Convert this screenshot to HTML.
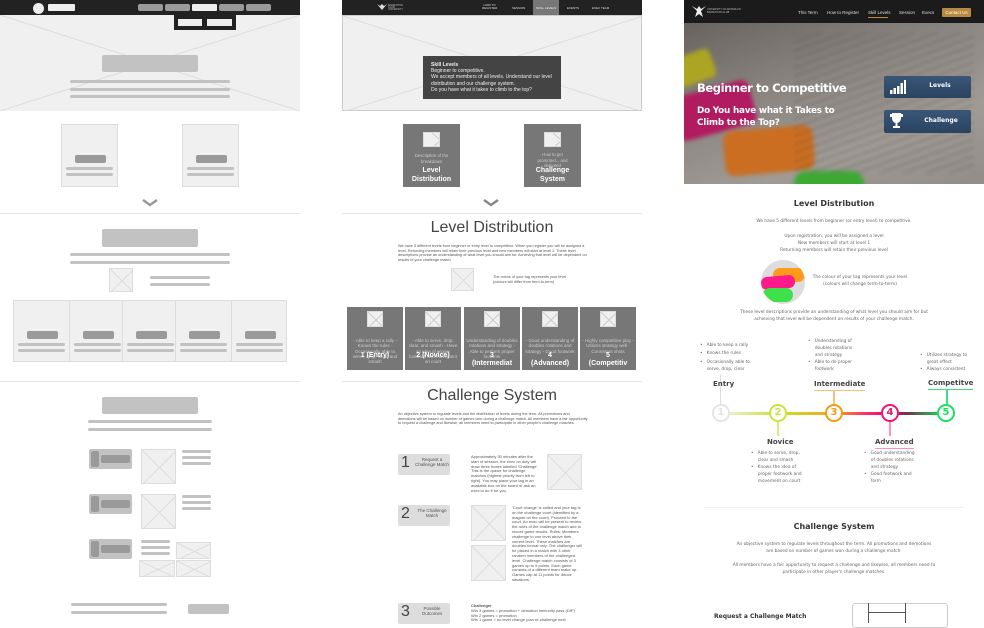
<!DOCTYPE html>
<html><head><meta charset="utf-8">
<style>
*{margin:0;padding:0;box-sizing:border-box}
body{width:984px;height:622px;background:#fff;position:relative;overflow:hidden;font-family:"Liberation Sans",sans-serif}
.a{position:absolute}
.g{background:#c2c2c2;border-radius:2px}
.d{background:#9a9a9a;border-radius:2px}
.ph{background:#f0f0f0;border:1px solid #ddd;overflow:hidden}
.t{position:absolute;font-size:4.5px;line-height:5.3px;color:#555}
.w{color:#eee}
.bul{position:absolute;font-family:"DejaVu Sans",sans-serif;font-size:4.3px;line-height:7px;color:#666}
.lbl{position:absolute;font-family:"DejaVu Sans",sans-serif;font-weight:bold;font-size:7px;color:#444;padding-bottom:2px}
.circ{position:absolute;width:18px;height:18px;border-radius:50%;background:#fff;border:2.5px solid;font-family:"DejaVu Sans",sans-serif;font-weight:bold;font-size:10px;text-align:center;line-height:13px}
</style></head><body>

<!-- ============ LEFT PANEL ============ -->
<div class="a" style="left:0;top:0;width:300px;height:15px;background:#222"></div>
<div class="a" style="left:33px;top:3px;width:11px;height:11px;border-radius:50%;background:#eee"></div>
<div class="a" style="left:48px;top:4px;width:27px;height:7px;background:#eee;border-radius:1px"></div>
<div class="a d" style="left:138px;top:4px;width:25px;height:7px"></div>
<div class="a d" style="left:165px;top:4px;width:25px;height:7px"></div>
<div class="a" style="left:192px;top:4px;width:25px;height:7px;background:#eee;border-radius:1px"></div>
<div class="a d" style="left:219px;top:4px;width:25px;height:7px"></div>
<div class="a d" style="left:246px;top:4px;width:25px;height:7px"></div>
<div class="a ph" style="left:0;top:15px;width:300px;height:96px;border:none">
<svg width="300" height="96" class="a"><line x1="0" y1="0" x2="300" y2="96" stroke="#ddd"/><line x1="300" y1="0" x2="0" y2="96" stroke="#ddd"/></svg></div>
<div class="a" style="left:174px;top:15px;width:62px;height:15px;background:#222"></div>
<div class="a" style="left:178px;top:19px;width:24px;height:7px;background:#eee"></div>
<div class="a" style="left:207px;top:19px;width:25px;height:7px;background:#eee"></div>
<div class="a g" style="left:102px;top:55px;width:96px;height:17px"></div>
<div class="a g" style="left:70px;top:80px;width:160px;height:3px"></div>
<div class="a g" style="left:70px;top:88px;width:160px;height:3px"></div>
<div class="a g" style="left:70px;top:95px;width:160px;height:3px"></div>

<div class="a ph" style="left:61px;top:124px;width:57px;height:63px"></div>
<div class="a d" style="left:75px;top:155px;width:31px;height:8px"></div>
<div class="a g" style="left:66px;top:167px;width:47px;height:3px"></div>
<div class="a g" style="left:66px;top:173px;width:47px;height:3px"></div>
<div class="a ph" style="left:182px;top:124px;width:57px;height:63px"></div>
<div class="a d" style="left:196px;top:155px;width:31px;height:8px"></div>
<div class="a g" style="left:187px;top:167px;width:47px;height:3px"></div>
<div class="a g" style="left:187px;top:173px;width:47px;height:3px"></div>
<svg class="a" style="left:142px;top:199px" width="16" height="8"><path d="M1 1 L8 6 L15 1" stroke="#999" stroke-width="2.5" fill="none"/></svg>
<div class="a" style="left:0;top:213px;width:300px;height:1px;background:#e6e6e6"></div>

<div class="a g" style="left:102px;top:229px;width:96px;height:18px"></div>
<div class="a g" style="left:70px;top:253px;width:160px;height:3px"></div>
<div class="a g" style="left:70px;top:261px;width:160px;height:3px"></div>
<div class="a ph" style="left:109px;top:268px;width:24px;height:24px"><svg width="24" height="24" class="a"><path d="M0 0L24 24M24 0L0 24" stroke="#ddd"/></svg></div>
<div class="a g" style="left:150px;top:276px;width:60px;height:3px"></div>
<div class="a g" style="left:150px;top:283px;width:60px;height:3px"></div>

<div class="a ph" style="left:13px;top:300px;width:274px;height:62px"></div>
<div class="a" style="left:69px;top:300px;width:1px;height:62px;background:#ddd"></div>
<div class="a" style="left:122px;top:300px;width:1px;height:62px;background:#ddd"></div>
<div class="a" style="left:175px;top:300px;width:1px;height:62px;background:#ddd"></div>
<div class="a" style="left:231px;top:300px;width:1px;height:62px;background:#ddd"></div>
<div class="a d" style="left:27px;top:331px;width:31px;height:8px"></div>
<div class="a d" style="left:83px;top:331px;width:31px;height:8px"></div>
<div class="a d" style="left:136px;top:331px;width:31px;height:8px"></div>
<div class="a d" style="left:189px;top:331px;width:31px;height:8px"></div>
<div class="a d" style="left:245px;top:331px;width:31px;height:8px"></div>
<div class="a g" style="left:18px;top:343px;width:47px;height:3px"></div><div class="a g" style="left:18px;top:349px;width:47px;height:3px"></div>
<div class="a g" style="left:74px;top:343px;width:47px;height:3px"></div><div class="a g" style="left:74px;top:349px;width:47px;height:3px"></div>
<div class="a g" style="left:127px;top:343px;width:47px;height:3px"></div><div class="a g" style="left:127px;top:349px;width:47px;height:3px"></div>
<div class="a g" style="left:180px;top:343px;width:47px;height:3px"></div><div class="a g" style="left:180px;top:349px;width:47px;height:3px"></div>
<div class="a g" style="left:236px;top:343px;width:47px;height:3px"></div><div class="a g" style="left:236px;top:349px;width:47px;height:3px"></div>
<div class="a" style="left:0;top:381px;width:300px;height:1px;background:#e6e6e6"></div>

<div class="a g" style="left:102px;top:397px;width:96px;height:17px"></div>
<div class="a g" style="left:88px;top:420px;width:124px;height:3px"></div>
<div class="a g" style="left:88px;top:428px;width:124px;height:3px"></div>
<div class="a g" style="left:89px;top:449px;width:43px;height:20px"></div>
<div class="a d" style="left:91px;top:451px;width:8px;height:16px"></div>
<div class="a d" style="left:101px;top:455px;width:29px;height:8px"></div>
<div class="a ph" style="left:141px;top:449px;width:35px;height:35px"><svg width="35" height="35" class="a"><path d="M0 0L35 35M35 0L0 35" stroke="#ddd"/></svg></div>
<div class="a g" style="left:182px;top:450px;width:29px;height:3px"></div><div class="a g" style="left:182px;top:456px;width:29px;height:3px"></div><div class="a g" style="left:182px;top:462px;width:29px;height:3px"></div>
<div class="a g" style="left:89px;top:494px;width:43px;height:20px"></div>
<div class="a d" style="left:91px;top:496px;width:8px;height:16px"></div>
<div class="a d" style="left:101px;top:500px;width:29px;height:8px"></div>
<div class="a ph" style="left:141px;top:494px;width:35px;height:35px"><svg width="35" height="35" class="a"><path d="M0 0L35 35M35 0L0 35" stroke="#ddd"/></svg></div>
<div class="a g" style="left:182px;top:495px;width:29px;height:3px"></div><div class="a g" style="left:182px;top:501px;width:29px;height:3px"></div><div class="a g" style="left:182px;top:507px;width:29px;height:3px"></div>
<div class="a g" style="left:89px;top:539px;width:43px;height:20px"></div>
<div class="a d" style="left:91px;top:541px;width:8px;height:16px"></div>
<div class="a d" style="left:101px;top:545px;width:29px;height:8px"></div>
<div class="a g" style="left:141px;top:540px;width:29px;height:3px"></div><div class="a g" style="left:141px;top:546px;width:29px;height:3px"></div><div class="a g" style="left:141px;top:552px;width:29px;height:3px"></div>
<div class="a ph" style="left:176px;top:542px;width:35px;height:17px"><svg width="35" height="17" class="a"><path d="M0 0L35 17M35 0L0 17" stroke="#ddd"/></svg></div>
<div class="a ph" style="left:139px;top:560px;width:36px;height:17px"><svg width="36" height="17" class="a"><path d="M0 0L36 17M36 0L0 17" stroke="#ddd"/></svg></div>
<div class="a ph" style="left:176px;top:560px;width:35px;height:17px"><svg width="35" height="17" class="a"><path d="M0 0L35 17M35 0L0 17" stroke="#ddd"/></svg></div>
<div class="a g" style="left:71px;top:603px;width:96px;height:3px"></div>
<div class="a g" style="left:71px;top:611px;width:96px;height:3px"></div>
<div class="a g" style="left:188px;top:604px;width:41px;height:10px"></div>

<!-- ============ MIDDLE PANEL ============ -->
<div class="a" style="left:342px;top:0;width:300px;height:15px;background:#222"></div>
<svg class="a" style="left:377px;top:4px" width="10" height="7"><path d="M0 0L5 6L10 0L7 2L5 0L3 2Z" fill="#ddd"/></svg>
<div class="a" style="left:388px;top:5px;width:22px;height:4px;font-size:2.5px;color:#bbb;line-height:2px">BADMINTON CLUB<br>UNIVERSITY</div>
<div class="a" style="left:482px;top:4px;font-size:3px;color:#ddd;line-height:3px;text-align:center">HOW TO<br>REGISTER</div>
<div class="a" style="left:512px;top:6px;font-size:3px;color:#ddd">SESSION</div>
<div class="a" style="left:533px;top:0;width:26px;height:15px;background:#777"></div>
<div class="a" style="left:536px;top:6px;font-size:3px;color:#eee">SKILL LEVELS</div>
<div class="a" style="left:567px;top:6px;font-size:3px;color:#ddd">EVENTS</div>
<div class="a" style="left:592px;top:6px;font-size:3px;color:#ddd">EXEC TEAM</div>
<div class="a ph" style="left:342px;top:15px;width:300px;height:96px;border-color:#ccc">
<svg width="300" height="96" class="a"><path d="M0 0L300 96M300 0L0 96" stroke="#ddd"/></svg></div>
<div class="a" style="left:423px;top:56px;width:138px;height:43px;background:#444;padding:6px 8px;font-size:5px;line-height:6.2px;color:#eee"><b>Skill Levels</b><br>Beginner to competitive.<br>We accept members of all levels. Understand our level distribution and our challenge system.<br>Do you have what it takes to climb to the top?</div>

<div class="a" style="left:403px;top:124px;width:57px;height:63px;background:#777;text-align:center">
<div class="a ph" style="left:20px;top:8px;width:17px;height:15px"><svg width="17" height="15" class="a"><path d="M0 0L17 15M17 0L0 15" stroke="#ccc"/></svg></div>
<div class="a" style="left:0;top:29px;width:57px;font-size:4.3px;color:#ccc;line-height:5.5px">Description of the<br>breakdown</div>
<div class="a" style="left:0;top:42px;width:57px;font-size:7px;font-weight:bold;color:#fff;line-height:9px">Level<br>Distribution</div></div>
<div class="a" style="left:524px;top:124px;width:57px;height:63px;background:#777;text-align:center">
<div class="a ph" style="left:20px;top:8px;width:17px;height:15px"><svg width="17" height="15" class="a"><path d="M0 0L17 15M17 0L0 15" stroke="#ccc"/></svg></div>
<div class="a" style="left:0;top:28px;width:57px;font-size:4.3px;color:#ccc;line-height:5.5px">How to get<br>promoted... and<br>demoted</div>
<div class="a" style="left:0;top:42px;width:57px;font-size:7px;font-weight:bold;color:#fff;line-height:9px">Challenge<br>System</div></div>
<svg class="a" style="left:483px;top:199px" width="16" height="8"><path d="M1 1 L8 6 L15 1" stroke="#888" stroke-width="2.5" fill="none"/></svg>
<div class="a" style="left:342px;top:213px;width:300px;height:1px;background:#e6e6e6"></div>
<div class="a" style="left:342px;top:219px;width:300px;text-align:center;font-size:16px;color:#444">Level Distribution</div>
<div class="t" style="left:398px;top:244px;width:190px;font-size:3.8px;line-height:4.6px">We have 5 different levels from beginner or entry level to competitive. When you register you will be assigned a level. Returning members will retain their previous level and new members will start at level 1. These level descriptions provide an understanding of what level you should aim for. Achieving that level will be dependent on results of your challenge match.</div>
<div class="a ph" style="left:451px;top:268px;width:23px;height:23px"><svg width="23" height="23" class="a"><path d="M0 0L23 23M23 0L0 23" stroke="#ddd"/></svg></div>
<div class="t" style="left:493px;top:275px;font-size:3.8px;line-height:4.6px">The colour of your tag represents your level<br>(colours will differ from term-to-term)</div>

<div class="a" style="left:347px;top:307px;width:56px;height:63px;background:#777"></div>
<div class="a" style="left:405px;top:307px;width:56px;height:63px;background:#777"></div>
<div class="a" style="left:464px;top:307px;width:56px;height:63px;background:#777"></div>
<div class="a" style="left:522px;top:307px;width:56px;height:63px;background:#777"></div>
<div class="a" style="left:580px;top:307px;width:56px;height:63px;background:#777"></div>
<div class="a ph" style="left:367px;top:311px;width:16px;height:16px"><svg width="16" height="16" class="a"><path d="M0 0L16 16M16 0L0 16" stroke="#ccc"/></svg></div>
<div class="a ph" style="left:425px;top:311px;width:16px;height:16px"><svg width="16" height="16" class="a"><path d="M0 0L16 16M16 0L0 16" stroke="#ccc"/></svg></div>
<div class="a ph" style="left:484px;top:311px;width:16px;height:16px"><svg width="16" height="16" class="a"><path d="M0 0L16 16M16 0L0 16" stroke="#ccc"/></svg></div>
<div class="a ph" style="left:542px;top:311px;width:16px;height:16px"><svg width="16" height="16" class="a"><path d="M0 0L16 16M16 0L0 16" stroke="#ccc"/></svg></div>
<div class="a ph" style="left:600px;top:311px;width:16px;height:16px"><svg width="16" height="16" class="a"><path d="M0 0L16 16M16 0L0 16" stroke="#ccc"/></svg></div>
<div class="t w" style="left:349px;top:338px;width:52px;text-align:center;color:#ccc">- Able to keep a rally - Knows the rules - Occasionally able to serve, drop, clear, and smash</div>
<div class="t w" style="left:407px;top:338px;width:52px;text-align:center;color:#ccc">- Able to serve, drop, clear, and smash - Have an idea of proper footwork and movement on court</div>
<div class="t w" style="left:466px;top:338px;width:52px;text-align:center;color:#ccc">Understanding of doubles rotations and strategy - Able to perform proper footwork</div>
<div class="t w" style="left:524px;top:338px;width:52px;text-align:center;color:#ccc">- Good understanding of doubles rotations and strategy - Good footwork</div>
<div class="t w" style="left:582px;top:338px;width:52px;text-align:center;color:#ccc">- Highly competitive play - Utilizes strategy well - Consistent shots</div>
<div class="a" style="left:347px;top:352px;width:56px;text-align:center;font-size:7px;font-weight:bold;color:#fff">1 (Entry)</div>
<div class="a" style="left:405px;top:352px;width:56px;text-align:center;font-size:7px;font-weight:bold;color:#fff">2 (Novice)</div>
<div class="a" style="left:464px;top:352px;width:56px;overflow:hidden;height:16px;text-align:center;font-size:7px;font-weight:bold;color:#fff;line-height:8px">3<br>(Intermediat</div>
<div class="a" style="left:522px;top:352px;width:56px;height:16px;overflow:hidden;text-align:center;font-size:7px;font-weight:bold;color:#fff;line-height:8px">4<br>(Advanced)</div>
<div class="a" style="left:580px;top:352px;width:56px;height:16px;overflow:hidden;text-align:center;font-size:7px;font-weight:bold;color:#fff;line-height:8px">5<br>(Competitiv</div>
<div class="a" style="left:342px;top:381px;width:300px;height:1px;background:#e6e6e6"></div>
<div class="a" style="left:342px;top:387px;width:300px;text-align:center;font-size:16px;color:#444">Challenge System</div>
<div class="t" style="left:398px;top:412px;width:190px;font-size:3.8px;line-height:4.6px">An objective system to regulate levels and the distribution of levels during the term. All promotions and demotions will be based on number of games won during a challenge match. All members have a fair opportunity to request a challenge and likewise, all members need to participate in other people's challenge matches.</div>
<div class="a" style="left:398px;top:454px;width:52px;height:21px;background:#ddd;border-radius:2px"></div>
<div class="a" style="left:401px;top:454px;font-size:16px;color:#444">1</div>
<div class="t" style="left:415px;top:457px;width:34px;text-align:center">Request a Challenge Match</div>
<div class="t" style="left:471px;top:455px;width:70px;font-size:4px;line-height:4.8px">Approximately 30 minutes after the start of session, the exec on duty will draw three boxes labelled 'Challenge'. This is the queue for challenge matches (highest priority from left to right). You may place your tag in an available box on the board or ask an exec to do it for you.</div>
<div class="a ph" style="left:547px;top:454px;width:35px;height:36px"><svg width="35" height="36" class="a"><path d="M0 0L35 36M35 0L0 36" stroke="#ddd"/></svg></div>
<div class="a" style="left:398px;top:505px;width:52px;height:21px;background:#ddd;border-radius:2px"></div>
<div class="a" style="left:401px;top:505px;font-size:16px;color:#444">2</div>
<div class="t" style="left:415px;top:508px;width:34px;text-align:center">The Challenge Match</div>
<div class="a ph" style="left:471px;top:505px;width:35px;height:36px"><svg width="35" height="36" class="a"><path d="M0 0L35 36M35 0L0 36" stroke="#ddd"/></svg></div>
<div class="a ph" style="left:471px;top:545px;width:35px;height:36px"><svg width="35" height="36" class="a"><path d="M0 0L35 36M35 0L0 36" stroke="#ddd"/></svg></div>
<div class="t" style="left:512px;top:506px;width:70px;font-size:4px;line-height:4.8px">'Court change' is called and your tag is on the challenge court (identified by a magnet on the court). Proceed to the court. An exec will be present to review the rules of the challenge match and to record game results. Rules: Members challenge to one level above their current level. These matches are doubles format only. The challenger will be placed in a match with 3 other random members of the challenged level. Challenge match consists of 3 games up to 9 points. Each game consists of a different team make up. Games cap at 11 points for deuce situations.</div>
<div class="a" style="left:398px;top:603px;width:52px;height:21px;background:#ddd;border-radius:2px"></div>
<div class="a" style="left:401px;top:603px;font-size:16px;color:#444">3</div>
<div class="t" style="left:415px;top:606px;width:34px;text-align:center">Possible Outcomes</div>
<div class="t" style="left:471px;top:604px;width:120px;font-size:4px;line-height:4.8px"><b>Challenger</b><br>Win 3 games = promotion + demotion immunity pass (DIP)<br>Win 2 games = promotion<br>Win 1 game = no level change (can re-challenge next</div>

<!-- ============ RIGHT PANEL ============ -->
<div class="a" style="left:684px;top:23px;width:300px;height:161px;overflow:hidden;background:linear-gradient(160deg,#77726d 0%,#a39e98 40%,#bbb6af 70%,#aaa59f 100%)">
 <div class="a" style="left:-10px;top:30px;width:40px;height:30px;background:#c9c224;border-radius:6px;transform:rotate(-20deg);filter:blur(2px)"></div>
 <div class="a" style="left:-10px;top:65px;width:80px;height:45px;background:#d01a6e;border-radius:8px;transform:rotate(-15deg);filter:blur(2px)"></div>
 <div class="a" style="left:40px;top:105px;width:90px;height:45px;background:#ef7f22;border-radius:10px;transform:rotate(-5deg);filter:blur(2px)"></div>
 <div class="a" style="left:110px;top:148px;width:70px;height:30px;background:#44c63a;border-radius:12px;filter:blur(2px)"></div>
 <div class="a" style="left:110px;top:10px;width:180px;height:140px;background:repeating-linear-gradient(160deg,rgba(80,75,70,.22) 0 2px,transparent 2px 8px);filter:blur(1.5px)"></div>
 <div class="a" style="left:0;top:0;width:300px;height:161px;background:rgba(40,35,35,.18)"></div>
</div>
<div class="a" style="left:684px;top:0;width:300px;height:23px;background:#1b1b1b"></div>
<svg class="a" style="left:692px;top:5px" width="14" height="13"><path d="M0 1L5 6L3 12L7 9L11 12L9 6L14 1L9 4L7 1L5 4Z" fill="#eee"/></svg>
<div class="a" style="left:707px;top:8px;font-size:2.5px;line-height:3px;color:#bbb">UNIVERSITY OF WATERLOO<br>BADMINTON CLUB</div>
<div class="a" style="left:798px;top:10px;font-size:4.5px;color:#ddd">This Term</div>
<div class="a" style="left:827px;top:10px;font-size:4.5px;color:#ddd">How to Register</div>
<div class="a" style="left:868px;top:10px;font-size:4.5px;color:#ddd">Skill Levels</div>
<div class="a" style="left:868px;top:17px;width:20px;height:1px;background:#b8893f"></div>
<div class="a" style="left:899px;top:10px;font-size:4.5px;color:#ddd">Session</div>
<div class="a" style="left:922px;top:10px;font-size:4.5px;color:#ddd">Execs</div>
<div class="a" style="left:942px;top:8px;width:29px;height:9px;background:#b8893f;border-radius:1px;font-size:4.5px;color:#fff;text-align:center;line-height:9px">Contact Us</div>
<div class="a" style="left:697px;top:81px;font-family:'DejaVu Sans',sans-serif;font-weight:bold;font-size:11.5px;color:#fff;letter-spacing:-.4px">Beginner to Competitive</div>
<div class="a" style="left:697px;top:105px;font-family:'DejaVu Sans',sans-serif;font-weight:bold;font-size:8.8px;line-height:12px;color:#fff;letter-spacing:-.2px">Do You have what it Takes to<br>Climb to the Top?</div>
<div class="a" style="left:884px;top:76px;width:87px;height:22px;background:linear-gradient(#3a5677,#2a4361);border-radius:2px"></div>
<svg class="a" style="left:890px;top:80px" width="16" height="14"><rect x="0" y="10" width="2.5" height="4" fill="#fff"/><rect x="3.5" y="8" width="2.5" height="6" fill="#fff"/><rect x="7" y="6" width="2.5" height="8" fill="#fff"/><rect x="10.5" y="3" width="2.5" height="11" fill="#fff"/><rect x="14" y="0" width="2" height="14" fill="#fff"/></svg>
<div class="a" style="left:920px;top:82px;width:40px;text-align:center;font-family:'DejaVu Sans',sans-serif;font-weight:bold;font-size:6px;color:#fff">Levels</div>
<div class="a" style="left:884px;top:110px;width:87px;height:23px;background:linear-gradient(#3a5677,#2a4361);border-radius:2px"></div>
<svg class="a" style="left:890px;top:113px" width="13" height="16"><path d="M2 0H11V5C11 8 9 10 6.5 10C4 10 2 8 2 5Z M0 1H2V4H0Z M11 1H13V4H11Z M5.5 10H7.5V13H5.5Z M3 13H10V15H3Z" fill="#fff"/></svg>
<div class="a" style="left:919px;top:117px;width:44px;text-align:center;font-family:'DejaVu Sans',sans-serif;font-weight:bold;font-size:6px;color:#fff">Challenge</div>

<div class="a" style="left:684px;top:199px;width:300px;text-align:center;font-family:'DejaVu Sans',sans-serif;font-weight:bold;font-size:8px;color:#333">Level Distribution</div>
<div class="bul" style="left:684px;top:218px;width:300px;text-align:center">We have 5 different levels from beginner (or entry level) to competitive.</div>
<div class="bul" style="left:684px;top:233px;width:300px;text-align:center">Upon registration, you will be assigned a level<br>New members will start at level 1<br>Returning members will retain their previous level</div>
<div class="a" style="left:761px;top:260px;width:44px;height:44px;border-radius:50%;overflow:hidden;background:#ddd">
 <div class="a" style="left:12px;top:8px;width:32px;height:14px;background:#ff9a1a;border-radius:8px"></div>
 <div class="a" style="left:0;top:16px;width:34px;height:13px;background:#ff1a8c;border-radius:6px;transform:rotate(-5deg)"></div>
 <div class="a" style="left:2px;top:28px;width:30px;height:14px;background:#3fe04a;border-radius:8px"></div>
</div>
<div class="bul" style="left:805px;top:274px;width:110px;text-align:center;white-space:nowrap">The colour of your tag represents your level<br>(colours will change term-to-term)</div>
<div class="bul" style="left:684px;top:309px;width:300px;text-align:center">These level descriptions provide an understanding of what level you should aim for but<br>achieving that level will be dependent on results of your challenge match.</div>

<!-- timeline -->
<div class="a" style="left:730px;top:412px;width:210px;height:3px;background:linear-gradient(90deg,#e8f0c0 0%,#c8e030 25%,#f5a020 50%,#ff2a6a 65%,#e0106a 75%,#6a3a4a 85%,#20d050 100%)"></div>
<div class="a" style="left:720px;top:374px;width:1px;height:30px;background:#ddd"></div>
<div class="a" style="left:833px;top:391px;width:2px;height:13px;background:#f8c080"></div>
<div class="a" style="left:946px;top:390px;width:2px;height:14px;background:#3fe080"></div>
<div class="a" style="left:777px;top:422px;width:2px;height:14px;background:#d8ec80"></div>
<div class="a" style="left:889px;top:422px;width:2px;height:14px;background:#ff90c0"></div>
<div class="circ" style="left:712px;top:404px;border-color:#e4e4e4;color:#e4e4e4">1</div>
<div class="circ" style="left:769px;top:404px;border-color:#c9e43a;color:#c9e43a">2</div>
<div class="circ" style="left:825px;top:404px;border-color:#f79a10;color:#f79a10">3</div>
<div class="circ" style="left:881px;top:404px;border-color:#f0146e;color:#f0146e">4</div>
<div class="circ" style="left:937px;top:404px;border-color:#1ee060;color:#1ee060">5</div>
<div class="lbl" style="left:713px;top:380px">Entry</div>
<div class="lbl" style="left:814px;top:380px;border-bottom:1px solid #f8c080">Intermediate</div>
<div class="lbl" style="left:928px;top:379px;border-bottom:1px solid #3fe080">Competitve</div>
<div class="lbl" style="left:767px;top:438px">Novice</div>
<div class="lbl" style="left:875px;top:438px;border-bottom:1px solid #ff90c0">Advanced</div>
<div class="bul" style="left:700px;top:342px">•&nbsp;&nbsp;&nbsp;Able to keep a rally<br><span style="line-height:10px">•&nbsp;&nbsp;&nbsp;Knows the rules</span><br>•&nbsp;&nbsp;&nbsp;Occasionally able to<br>&nbsp;&nbsp;&nbsp;&nbsp;&nbsp;serve, drop, clear</div>
<div class="bul" style="left:808px;top:338px">•&nbsp;&nbsp;&nbsp;Understanding of<br>&nbsp;&nbsp;&nbsp;&nbsp;&nbsp;doubles rotations<br>&nbsp;&nbsp;&nbsp;&nbsp;&nbsp;and strategy<br>•&nbsp;&nbsp;&nbsp;Able to do proper<br>&nbsp;&nbsp;&nbsp;&nbsp;&nbsp;footwork</div>
<div class="bul" style="left:920px;top:352px">•&nbsp;&nbsp;&nbsp;Utilizes strategy to<br>&nbsp;&nbsp;&nbsp;&nbsp;&nbsp;great effect<br>•&nbsp;&nbsp;&nbsp;Always consistent</div>
<div class="bul" style="left:751px;top:450px">•&nbsp;&nbsp;&nbsp;Able to serve, drop,<br>&nbsp;&nbsp;&nbsp;&nbsp;&nbsp;clear and smash<br>•&nbsp;&nbsp;&nbsp;Knows the idea of<br>&nbsp;&nbsp;&nbsp;&nbsp;&nbsp;proper footwork and<br>&nbsp;&nbsp;&nbsp;&nbsp;&nbsp;movement on court</div>
<div class="bul" style="left:864px;top:450px">•&nbsp;&nbsp;&nbsp;Good understanding<br>&nbsp;&nbsp;&nbsp;&nbsp;&nbsp;of doubles rotations<br>&nbsp;&nbsp;&nbsp;&nbsp;&nbsp;and strategy<br>•&nbsp;&nbsp;&nbsp;Good footwork and<br>&nbsp;&nbsp;&nbsp;&nbsp;&nbsp;form</div>
<div class="a" style="left:704px;top:507px;width:260px;height:1px;background:#eee"></div>
<div class="a" style="left:684px;top:522px;width:300px;text-align:center;font-family:'DejaVu Sans',sans-serif;font-weight:bold;font-size:8px;color:#333">Challenge System</div>
<div class="bul" style="left:684px;top:541px;width:300px;text-align:center">An objective system to regulate levels throughout the term. All promotions and demotions<br>are based on number of games won during a challenge match.</div>
<div class="bul" style="left:684px;top:562px;width:300px;text-align:center">All members have a fair opportunity to request a challenge and likewise, all members need to<br>participate in other player's challenge matches.</div>
<div class="a" style="left:714px;top:613px;font-family:'DejaVu Sans',sans-serif;font-weight:bold;font-size:6px;color:#333">Request a Challenge Match</div>
<div class="a" style="left:852px;top:603px;width:96px;height:25px;border:1px solid #ccc;border-radius:3px"></div>
<div class="a" style="left:868px;top:603px;width:1px;height:20px;background:#555"></div>
<div class="a" style="left:905px;top:603px;width:1px;height:20px;background:#555"></div>
<div class="a" style="left:868px;top:612px;width:37px;height:1px;background:#555"></div>
</body></html>
